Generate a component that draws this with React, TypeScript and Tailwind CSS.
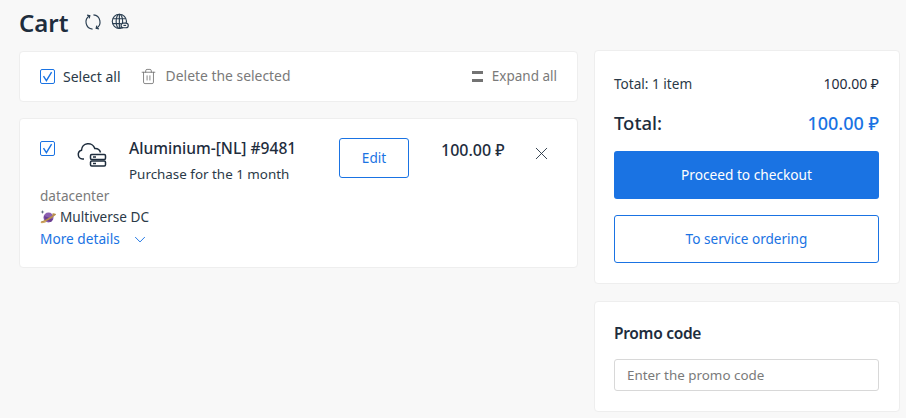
import React from 'react';
import { Trash2, X } from 'lucide-react';

function Check() {
  return (
    <span className="flex h-[15px] w-[15px] shrink-0 items-center justify-center rounded-[2px] border border-[#1a73e3] bg-white">
      <svg width="13" height="13" viewBox="0 0 13 13" fill="none" stroke="#1a73e3" strokeWidth="1.4">
        <path d="M2.5 6.2 5.4 10.6 10.6 2.2" />
      </svg>
    </span>
  );
}

function Planet() {
  return (
    <svg width="16" height="16" viewBox="0 0 16 16" className="shrink-0">
      <circle cx="8.5" cy="8.5" r="5" fill="#8b5fb0" />
      <path d="M4 7 13 10 11 13 5 11.5Z" fill="#6a3f90" />
      <path d="M1 13.2C3 13 11 9.4 15 5.4 13.8 5 12.8 5.2 12.4 5.4" fill="none" stroke="#b98f4a" strokeWidth="1.6" />
      <path d="M1 13.2C1.4 14 4 13.4 6 12.4" fill="none" stroke="#d1a862" strokeWidth="1.2" />
      <path d="M2.5 1 3 2.6 4.5 3 3 3.5 2.5 5 2 3.5 0.5 3 2 2.6Z" fill="#56667a" />
    </svg>
  );
}

export default function App() {
  return (
    <div className="min-h-[418px] overflow-hidden bg-[#f8f8f8] pl-[19px] font-['Noto_Sans',sans-serif] text-[14px] text-[#2b3a48]">
      {/* Header */}
      <div className="flex h-[50px] items-start gap-[15px] pt-[6px]">
        <h1 className="text-[24px] leading-[34px] font-semibold text-[#1e2d3d]">Cart</h1>
        <div className="mt-[7px] flex items-center gap-[9px] text-[#2b3f52]">
          <svg width="18" height="18" viewBox="0 0 20 20" fill="none" stroke="currentColor" strokeWidth="1.3">
            <path d="M6.4 3A8 8 0 0 0 9.5 18" />
            <path d="M13.6 17A8 8 0 0 0 10.5 2" />
            <path d="M3.4 2.4 6.5 3 5.8 6" />
            <path d="M16.6 17.6 13.5 17 14.2 14" />
          </svg>
          <svg width="18" height="18" viewBox="0 0 20 20" fill="none" stroke="currentColor" strokeWidth="1.3">
            <circle cx="9.3" cy="9.3" r="7.9" />
            <ellipse cx="9.3" cy="9.3" rx="3.6" ry="7.9" />
            <path d="M9.3 1.4V17M2 6.4H16.6M1.8 11.8H11" />
            <rect x="11.2" y="11.2" width="8" height="5.2" rx="2.6" fill="#f8f8f8" />
            <path d="M13.8 13.8H16.8" />
          </svg>
        </div>
      </div>

      <div className="flex items-start gap-[16px]">
        {/* Left column */}
        <div className="flex w-[559px] shrink-0 flex-col gap-[16px] pt-px">
          <div className="flex h-[51px] items-center rounded-[4px] border border-[#eeeeee] bg-white pr-[20px] pl-[20px]">
            <Check />
            <span className="ml-[8px] text-[#2b3a48]">Select all</span>
            <Trash2 size={17} strokeWidth={1.2} className="ml-[19px] text-[#737373]" />
            <span className="ml-[9px] text-[13.9px] text-[#7a7a7a]">Delete the selected</span>
            <div className="ml-auto flex items-center">
              <span className="flex w-[11px] flex-col gap-[5px]">
                <span className="h-[3px] bg-[#737373]" />
                <span className="h-[3px] bg-[#737373]" />
              </span>
              <span className="ml-[9px] text-[13.5px] text-[#7a7a7a]">Expand all</span>
            </div>
          </div>

          <div className="h-[150px] rounded-[4px] border border-[#eeeeee] bg-white pt-[19px] pl-[20px]">
            <div className="flex items-start">
              <div className="mt-[3px]"><Check /></div>
              <svg width="32" height="32" viewBox="0 0 32 32" fill="none" stroke="#1e2d3d" strokeWidth="1.5" className="mt-[2px] ml-[21px] shrink-0">
                <path d="M8 19H6.5A4.5 4.5 0 0 1 5.5 10.2 6.8 6.8 0 0 1 18.8 8.5 5.5 5.5 0 0 1 24.5 12.5" />
                <rect x="14.5" y="14.5" width="15" height="5" rx="1.2" />
                <rect x="14.5" y="21" width="15" height="5" rx="1.2" />
                <path d="M17 17H20M17 23.5H20" />
              </svg>
              <div className="ml-[21px] w-[210px]">
                <div className="text-[15.6px] leading-[20px] font-medium text-[#1e2d3d]">Aluminium-[NL] #9481</div>
                <div className="mt-[6px] text-[13.4px] leading-[20px]">Purchase for the 1 month</div>
              </div>
              <button className="h-[40px] w-[70px] rounded-[3px] border border-[#1a73e3] text-[13.6px] text-[#1a73e3]">Edit</button>
              <div className="ml-[32px] w-[64px] text-[16px] leading-[24px] font-medium whitespace-nowrap text-[#1e2d3d]">100.00 ₽</div>
              <X size={21} strokeWidth={1} className="mt-[5px] ml-[26px] text-[#1e2d3d]" />
            </div>
            <div className="mt-[2px] text-[13.6px] leading-[20px] text-[#7a7a7a]">datacenter</div>
            <div className="mt-[1px] flex items-center gap-[4px] text-[13.6px] leading-[20px]"><Planet />Multiverse DC</div>
            <div className="mt-[2px] flex items-center gap-[14px] text-[13.7px] leading-[20px] text-[#1a73e3]">
              More details
              <svg width="12" height="7" viewBox="0 0 13 8" fill="none" stroke="currentColor" strokeWidth="1.1">
                <path d="M1 1.2 6.5 6.8 12 1.2" />
              </svg>
            </div>
          </div>
        </div>

        {/* Right column */}
        <div className="flex w-[306px] shrink-0 flex-col gap-[17px]">
          <div className="h-[234px] rounded-[4px] border border-[#eeeeee] bg-white pt-[23px] pr-[20px] pl-[19px]">
            <div className="flex justify-between leading-[20px]">
              <span className="text-[13.6px]">Total: 1 item</span>
              <span className="text-[#1e2d3d]">100.00 ₽</span>
            </div>
            <div className="mt-[17px] flex items-center justify-between leading-[24px]">
              <span className="text-[18.5px] font-medium text-[#1e2d3d]">Total:</span>
              <span className="text-[18px] font-medium text-[#1a73e3]">100.00 ₽</span>
            </div>
            <button className="mt-[16px] h-[48px] w-full rounded-[3px] bg-[#1a73e3] text-[13.7px] text-white">Proceed to checkout</button>
            <button className="mt-[16px] h-[48px] w-full rounded-[3px] border border-[#1a73e3] text-[13.6px] text-[#1a73e3]">To service ordering</button>
          </div>
          <div className="h-[111px] rounded-[4px] border border-[#eeeeee] bg-white pt-[19px] pr-[20px] pl-[19px]">
            <div className="text-[15.5px] leading-[24px] font-semibold tracking-[-0.3px] text-[#1e2d3d]">Promo code</div>
            <input
              placeholder="Enter the promo code"
              className="mt-[14px] h-[32px] w-full rounded-[3px] border border-[#d8d8d8] px-[12px] text-[13.4px] placeholder:text-[#7a7a7a]"
            />
          </div>
        </div>
      </div>
    </div>
  );
}
